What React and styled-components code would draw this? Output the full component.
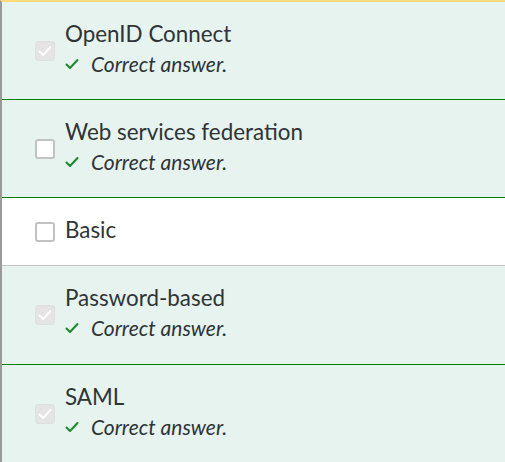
import React from "react";
import styled, { createGlobalStyle } from "styled-components";

const Global = createGlobalStyle`
  html, body { margin: 0; padding: 0; background: #ffffff; }
  body { font-family: Lato, "Open Sans", "Liberation Sans", sans-serif; color: #333333; }
`;

const Panel = styled.div`
  width: 505px;
  height: 462px;
  box-sizing: border-box;
  border-left: 2px solid #9a9a9a;
  border-top: 2px solid #ffd97a;
  overflow: hidden;
  display: flex;
  flex-direction: column;
`;

const Row = styled.div`
  display: flex;
  align-items: center;
  gap: 10px;
  padding: 16px 0 ${(p) => (p.$tall ? "17px" : "16px")} 33px;
  background: ${(p) => (p.$correct ? "#e6f3ee" : "#ffffff")};
  border-bottom: 1px solid ${(p) => (p.$correct ? "#008000" : "#c4c4c4")};
  &:last-child { border-bottom: none; }
`;

const Box = styled.span`
  flex: 0 0 auto;
  width: 20px;
  height: 20px;
  box-sizing: border-box;
  border-radius: 3px;
  display: flex;
  align-items: center;
  justify-content: center;
  background: ${(p) => (p.$checked ? "#e4e4e4" : "#ffffff")};
  border: ${(p) => (p.$checked ? "1px solid #e0e0e0" : "2px solid #c2c2c2")};
`;

const Body = styled.div`
  display: flex;
  flex-direction: column;
  padding-bottom: 4px;
`;

const Title = styled.div`
  font-size: 22.4px;
  line-height: 31px;
  color: #2f3437;
`;

const Feedback = styled.div`
  display: flex;
  align-items: center;
  gap: 12px;
  font-size: 21px;
  line-height: 30px;
  font-style: italic;
  color: #2f3437;
`;

const Tick = ({ color = "#1a8a2e", size = 14 }) => (
  <svg width={size} height={size} viewBox="0 0 14 14" fill="none">
    <path d="M1.5 7.5 L5 11 L12.5 3" stroke={color} strokeWidth="2" strokeLinecap="round" strokeLinejoin="round" />
  </svg>
);

const options = [
  { label: "OpenID Connect", checked: true, correct: true },
  { label: "Web services federation", checked: false, correct: true },
  { label: "Basic", checked: false, correct: false },
  { label: "Password-based", checked: true, correct: true, tall: true },
  { label: "SAML", checked: true, correct: true },
];

export default function App() {
  return (
    <>
      <Global />
      <Panel>
        {options.map((o) => (
          <Row key={o.label} $correct={o.correct} $tall={o.tall}>
            <Box $checked={o.checked}>
              {o.checked && <Tick color="#ffffff" size={14} />}
            </Box>
            <Body>
              <Title>{o.label}</Title>
              {o.correct && (
                <Feedback>
                  <Tick />
                  <span>Correct answer.</span>
                </Feedback>
              )}
            </Body>
          </Row>
        ))}
      </Panel>
    </>
  );
}
